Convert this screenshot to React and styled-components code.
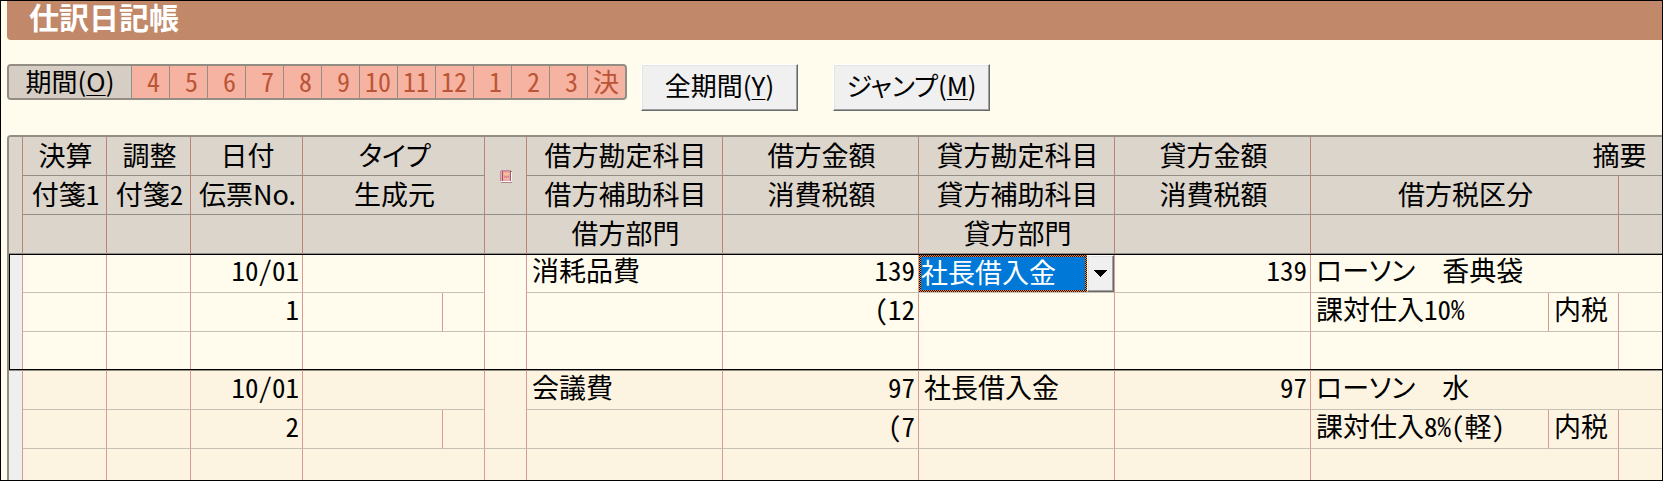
import { useState } from 'react';
import styled, { createGlobalStyle, css } from 'styled-components';

const GlobalStyle = createGlobalStyle`
  * {
    box-sizing: border-box;
  }
  body {
    margin: 0;
    background: #fffced;
    color: #000;
    font-family: 'Noto Sans CJK JP', sans-serif;
    font-size: 26px;
    line-height: 30px;
  }
  button,
  select {
    margin: 0;
    color: inherit;
    font: inherit;
  }
`;

// Window frame, the journal runs past its right and bottom edges
const Frame = styled.main`
  height: 100vh;
  padding-left: 6px;
  overflow: hidden;
  border: 1px solid #000;
`;

const TitleBar = styled.h1`
  height: 39px;
  margin: 0;
  padding: 0 22px;
  border-radius: 0 0 0 4px;
  background: #c18969;
  color: #fff;
  font-size: 30px;
  font-weight: 700;
  line-height: 30px;
`;

const Toolbar = styled.div`
  display: flex;
  align-items: flex-start;
  gap: 14px;
  padding: 24px 0;
`;

const Period = styled.div`
  display: flex;
  height: 36px;
  border: 2px solid #938e85;
  border-radius: 4px;
  background: #f7b3a1;
`;

const PeriodLabel = styled.span`
  display: flex;
  align-items: center;
  justify-content: center;
  width: 122px;
  padding-bottom: 2px;
  border-radius: 2px 0 0 2px;
  background: #d6cec4;
`;

const Month = styled.button`
  width: 38px;
  padding: 0 ${({ $digit }) => ($digit ? 9 : 6)}px 2px 0;
  border: 0;
  border-left: 1px solid #938e85;
  background: transparent;
  color: #bb5537;
  text-align: right;
  font-feature-settings: 'hwid';
`;

const Commands = styled.div`
  display: flex;
  gap: 35px;
`;

// Classic raised edge shared by the push buttons and the drop-down arrow
const raised = css`
  border: 1px solid;
  border-color: #fff #696969 #696969 #fff;
  background: #f0f0f0;
  box-shadow:
    inset -1px -1px 0 #a0a0a0,
    inset 1px 1px 0 #e3e3e3;
`;

const PushButton = styled.button`
  ${raised}
  width: 157px;
  height: 47px;
  padding: 0 0 5px;
  white-space: nowrap;
  font-feature-settings: 'palt';
`;

const AccessKey = styled.u`
  text-decoration-thickness: 1px;
  text-underline-offset: 3px;
`;

const Journal = styled.div`
  border: 2px solid #938e85;
  border-width: 2px 0 0 2px;
  border-radius: 4px 0 0 0;
  overflow: hidden;
`;

const Table = styled.table`
  width: 1918px;
  table-layout: fixed;
  border-collapse: separate;
  border-spacing: 0;
  font-size: 27px;
`;

const Col = styled.col`
  width: ${({ $width }) => $width}px;
`;

// 'hwid' gives half-width figures, 'palt' closes up the kana
const features = {
  half: "'hwid'",
  kana: "'palt'",
  plain: 'normal',
};

const HeadCell = styled.th`
  height: 39px;
  padding: ${({ $icon }) => ($icon ? '2px 0 0' : '0 0 2px 2px')};
  border-right: 1px solid #bc8377;
  border-bottom: 1px solid #938e85;
  background: #dcd5cc;
  font-weight: 400;
  white-space: nowrap;
  font-feature-settings: ${({ $figures = 'half' }) => features[$figures]};
`;

const Entry = styled.tbody`
  position: relative;
  background: ${({ $selected }) => ($selected ? '#fffced' : '#fdf3e1')};
  ${({ $selected }) =>
    $selected &&
    css`
      &::after {
        content: '';
        position: absolute;
        inset: 0 0 1px;
        border: 1px solid #000;
        pointer-events: none;
      }
    `}
`;

const Cell = styled.td`
  height: 39px;
  padding: ${({ $flush }) => ($flush ? '1px 0 0' : '0 3px 7px 5px')};
  border-right: 1px solid #d69b91;
  border-bottom: 1px solid ${({ $last }) => ($last ? '#938e85' : '#c6c1b5')};
  text-align: ${({ $align }) => $align || 'left'};
  white-space: nowrap;
  font-feature-settings: ${({ $figures = 'half' }) => features[$figures]};
`;

const RowMarker = styled(Cell)`
  background: #efefef;
`;

const Combo = styled.div`
  display: flex;
  height: 37px;
`;

// Checkered focus ring around the highlighted value
const ComboFocus = styled.div`
  flex: 1;
  min-width: 0;
  padding: 2px;
  background: repeating-conic-gradient(#ff8728 0 25%, #101010 0 50%) 0 0 / 2px
    2px;
`;

const ComboSelect = styled.select`
  display: block;
  width: 100%;
  height: 33px;
  padding: 0 0 4px;
  border: 0;
  border-radius: 0;
  outline: 0;
  appearance: none;
  background: #0078d7;
  color: #fff;
`;

const ComboArrow = styled.button`
  ${raised}
  display: flex;
  align-items: center;
  justify-content: center;
  width: 27px;
  padding: 0;
`;

const Icon = styled.svg`
  display: block;
  margin: 0 auto;
  shape-rendering: crispEdges;
`;

function BookIcon() {
  return (
    <Icon width="12" height="13" viewBox="0 0 12 13" role="img" aria-label="付箋">
      <path fill="#b8929a" d="M1 0h10v1H1zM0 1h1v10H0z" />
      <path fill="#f0a8ae" d="M1 1h10v10H1z" />
      <path fill="#9c5a68" d="M2 1h1v10H2zM10 1h1v10h-1z" />
      <path fill="#e58a96" d="M3 1h7v1H3zM4 6h5v2H4z" />
      <path fill="#f5e050" d="M4 3h1v1H4zM5 4h1v1H5zM6 3h1v1H6zM7 4h1v1H7zM8 3h1v1H8zM5 8h1v1H5zM7 8h1v1H7z" />
      <path fill="#fff" d="M1 11h10v1H1zM11 2h1v9h-1z" />
      <path fill="#ac8288" d="M1 12h11v1H1zM11 1h1v1h-1z" />
    </Icon>
  );
}

function ArrowIcon() {
  return (
    <Icon width="13" height="7" viewBox="0 0 13 7" aria-hidden="true">
      <path d="M0 0h13v1H0zM1 1h11v1H1zM2 2h9v1H2zM3 3h7v1H3zM4 4h5v1H4zM5 5h3v1H5zM6 6h1v1H6z" />
    </Icon>
  );
}

const months = ['4', '5', '6', '7', '8', '9', '10', '11', '12', '1', '2', '3', '決'];

const columns = [14, 84, 84, 112, 140, 42, 42, 196, 196, 196, 196, 238, 70, 308];

const entries = [
  {
    date: '10/01',
    no: '1',
    debit: '消耗品費',
    amount: '139',
    tax: '(12',
    credit: '社長借入金',
    note: 'ローソン　香典袋',
    taxType: '課対仕入10%',
    selected: true,
  },
  {
    date: '10/01',
    no: '2',
    debit: '会議費',
    amount: '97',
    tax: '(7',
    credit: '社長借入金',
    note: 'ローソン　水',
    taxType: '課対仕入8%(軽)',
  },
];

function AccountCombo({ account }) {
  const [value, setValue] = useState(account);
  return (
    <Combo>
      <ComboFocus>
        <ComboSelect
          aria-label="貸方勘定科目"
          value={value}
          onChange={(e) => setValue(e.target.value)}
        >
          <option>社長借入金</option>
          <option>消耗品費</option>
          <option>会議費</option>
        </ComboSelect>
      </ComboFocus>
      <ComboArrow type="button" aria-label="科目一覧">
        <ArrowIcon />
      </ComboArrow>
    </Combo>
  );
}

function JournalHead() {
  return (
    <thead>
      <tr>
        <HeadCell rowSpan={3} />
        <HeadCell>決算</HeadCell>
        <HeadCell>調整</HeadCell>
        <HeadCell>日付</HeadCell>
        <HeadCell colSpan={2} $figures="kana">タイプ</HeadCell>
        <HeadCell rowSpan={2} $icon>
          <BookIcon />
        </HeadCell>
        <HeadCell>借方勘定科目</HeadCell>
        <HeadCell>借方金額</HeadCell>
        <HeadCell>貸方勘定科目</HeadCell>
        <HeadCell>貸方金額</HeadCell>
        <HeadCell colSpan={3}>摘要</HeadCell>
      </tr>
      <tr>
        <HeadCell>付箋1</HeadCell>
        <HeadCell>付箋2</HeadCell>
        <HeadCell $figures="plain">伝票No.</HeadCell>
        <HeadCell colSpan={2}>生成元</HeadCell>
        <HeadCell>借方補助科目</HeadCell>
        <HeadCell>消費税額</HeadCell>
        <HeadCell>貸方補助科目</HeadCell>
        <HeadCell>消費税額</HeadCell>
        <HeadCell colSpan={2}>借方税区分</HeadCell>
        <HeadCell />
      </tr>
      <tr>
        <HeadCell />
        <HeadCell />
        <HeadCell />
        <HeadCell colSpan={2} />
        <HeadCell />
        <HeadCell>借方部門</HeadCell>
        <HeadCell />
        <HeadCell>貸方部門</HeadCell>
        <HeadCell />
        <HeadCell colSpan={2} />
        <HeadCell />
      </tr>
    </thead>
  );
}

// One journal entry takes three table rows
function JournalEntry({ entry }) {
  return (
    <Entry $selected={entry.selected}>
      <tr>
        <RowMarker rowSpan={3} $last />
        <Cell />
        <Cell />
        <Cell $align="right">{entry.date}</Cell>
        <Cell colSpan={2} />
        <Cell rowSpan={2} />
        <Cell>{entry.debit}</Cell>
        <Cell $align="right">{entry.amount}</Cell>
        {entry.selected ? (
          <Cell $flush>
            <AccountCombo account={entry.credit} />
          </Cell>
        ) : (
          <Cell>{entry.credit}</Cell>
        )}
        <Cell $align="right">{entry.amount}</Cell>
        <Cell colSpan={3} $figures="kana">{entry.note}</Cell>
      </tr>
      <tr>
        <Cell />
        <Cell />
        <Cell $align="right">{entry.no}</Cell>
        <Cell />
        <Cell />
        <Cell />
        <Cell $align="right">{entry.tax}</Cell>
        <Cell />
        <Cell />
        <Cell>{entry.taxType}</Cell>
        <Cell>内税</Cell>
        <Cell />
      </tr>
      <tr>
        <Cell $last />
        <Cell $last />
        <Cell $last />
        <Cell $last colSpan={2} />
        <Cell $last />
        <Cell $last />
        <Cell $last />
        <Cell $last />
        <Cell $last />
        <Cell $last colSpan={2} />
        <Cell $last />
      </tr>
    </Entry>
  );
}

function App() {
  return (
    <Frame>
      <GlobalStyle />
      <TitleBar>仕訳日記帳</TitleBar>
      <Toolbar>
        <Period role="group" aria-labelledby="period-label">
          <PeriodLabel id="period-label">
            期間(<AccessKey>O</AccessKey>)
          </PeriodLabel>
          {months.map((month) => (
            <Month key={month} type="button" $digit={/^\d$/.test(month)}>
              {month}
            </Month>
          ))}
        </Period>
        <Commands>
          <PushButton type="button" accessKey="y">
            全期間(<AccessKey>Y</AccessKey>)
          </PushButton>
          <PushButton type="button" accessKey="m">
            ジャンプ(<AccessKey>M</AccessKey>)
          </PushButton>
        </Commands>
      </Toolbar>
      <Journal>
        <Table>
          <colgroup>
            {columns.map((width, i) => (
              <Col key={i} $width={width} />
            ))}
          </colgroup>
          <JournalHead />
          {entries.map((entry) => (
            <JournalEntry key={entry.no} entry={entry} />
          ))}
        </Table>
      </Journal>
    </Frame>
  );
}

export default App;
